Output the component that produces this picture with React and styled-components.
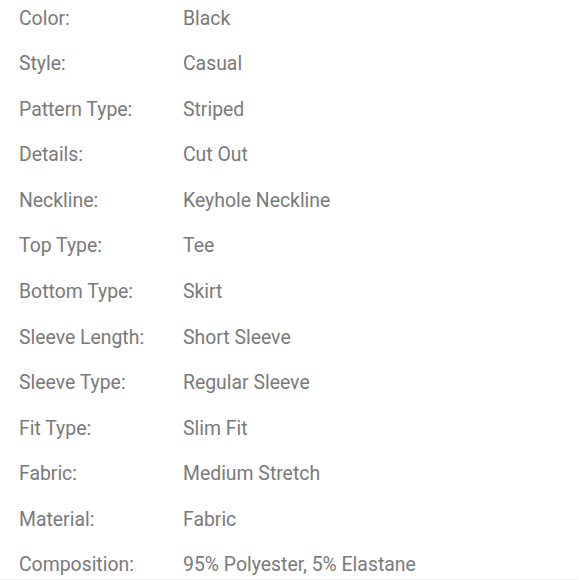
import React from 'react';
import styled, { createGlobalStyle } from 'styled-components';

const GlobalStyle = createGlobalStyle`
  html, body {
    margin: 0;
    padding: 0;
    background: #ffffff;
  }
  body {
    font-family: Roboto, "Noto Sans", "Liberation Sans", sans-serif;
  }
`;

const Wrapper = styled.div`
  width: 578px;
  height: 579px;
  overflow: hidden;
  border-bottom: 1px solid #f0f0f0;
  box-sizing: content-box;
`;

const Table = styled.div`
  display: grid;
  grid-template-columns: 164px 1fr;
  grid-auto-rows: 23px;
  row-gap: 22.58px;
  padding: 6.5px 0 0 19px;
`;

const Cell = styled.div`
  font-size: 19.4px;
  line-height: 23px;
  color: #7a7a7a;
  white-space: nowrap;
`;

const SPECS = [
  ['Color:', 'Black'],
  ['Style:', 'Casual'],
  ['Pattern Type:', 'Striped'],
  ['Details:', 'Cut Out'],
  ['Neckline:', 'Keyhole Neckline'],
  ['Top Type:', 'Tee'],
  ['Bottom Type:', 'Skirt'],
  ['Sleeve Length:', 'Short Sleeve'],
  ['Sleeve Type:', 'Regular Sleeve'],
  ['Fit Type:', 'Slim Fit'],
  ['Fabric:', 'Medium Stretch'],
  ['Material:', 'Fabric'],
  ['Composition:', '95% Polyester, 5% Elastane'],
];

export default function App() {
  return (
    <Wrapper>
      <GlobalStyle />
      <Table>
        {SPECS.map(([label, value]) => (
          <React.Fragment key={label}>
            <Cell>{label}</Cell>
            <Cell>{value}</Cell>
          </React.Fragment>
        ))}
      </Table>
    </Wrapper>
  );
}
